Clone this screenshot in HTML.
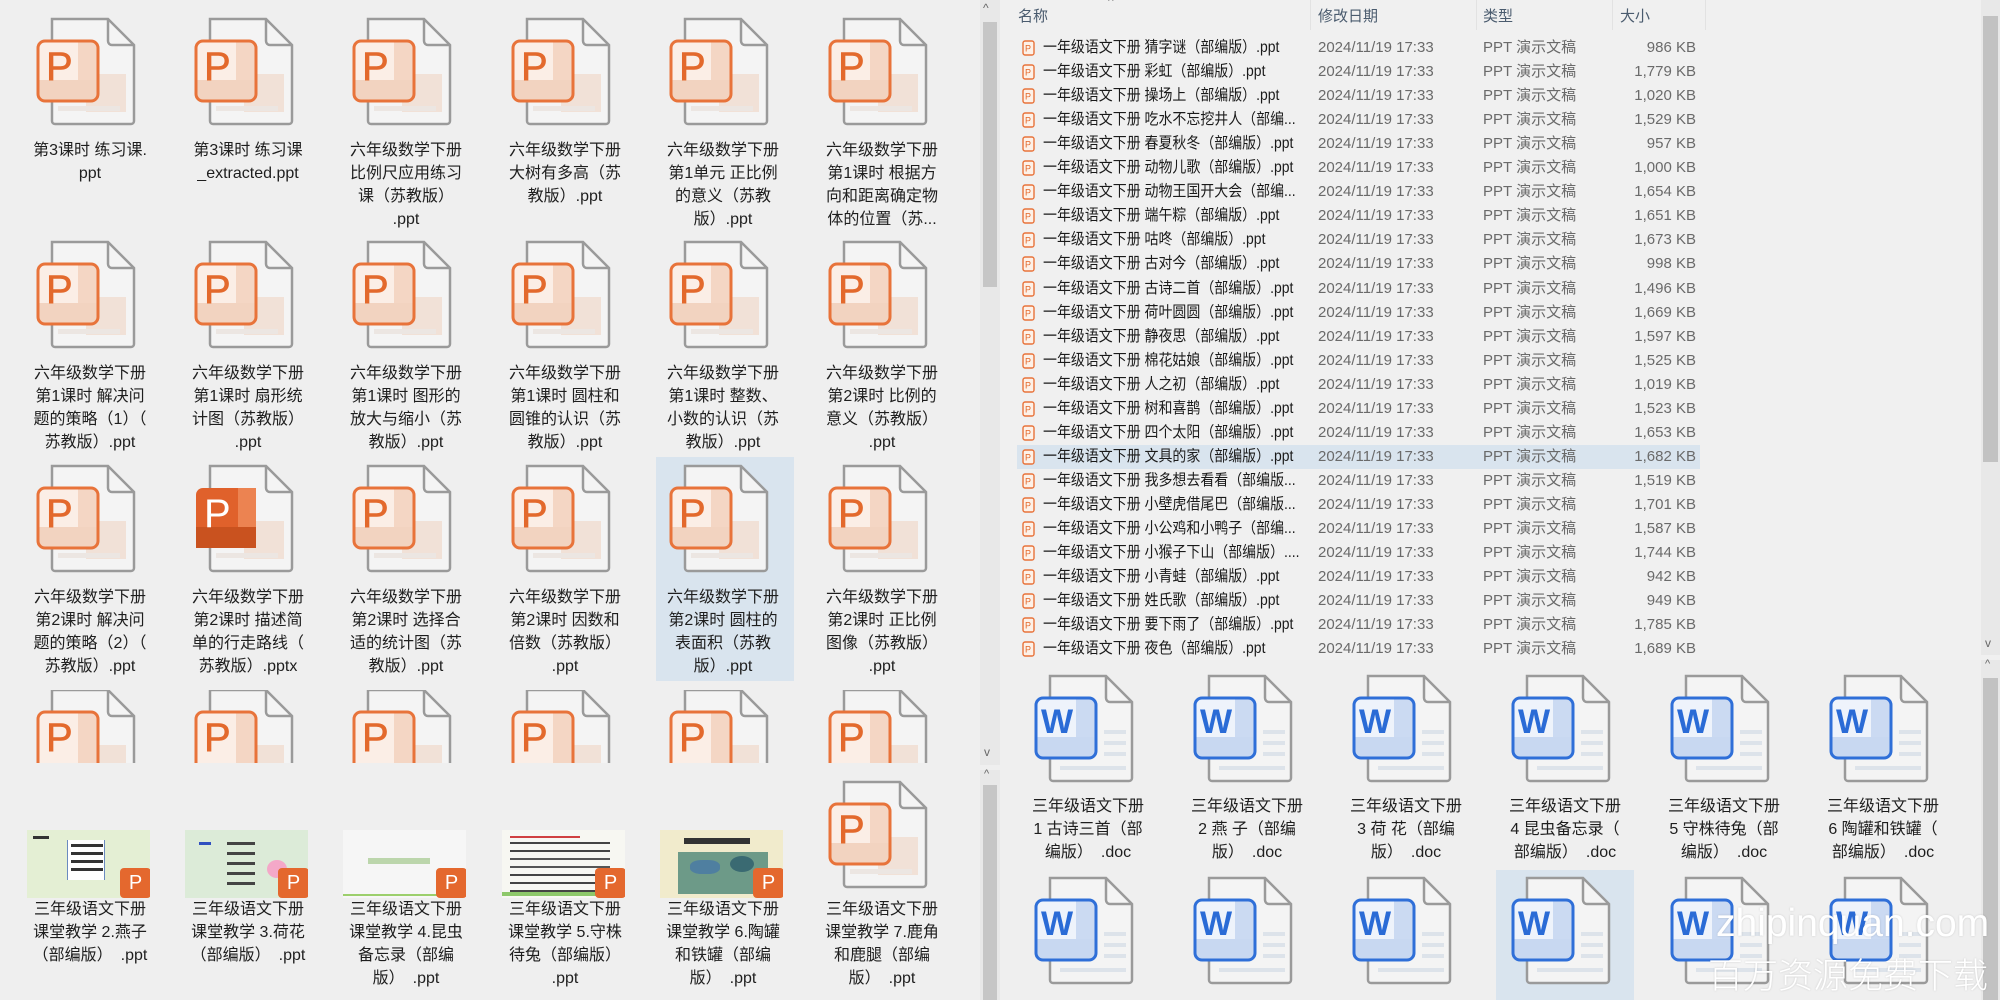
<!DOCTYPE html>
<html><head><meta charset="utf-8">
<style>
*{margin:0;padding:0;box-sizing:border-box}
body{width:2000px;height:1000px;overflow:hidden;background:#efefef;position:relative;font-family:"Liberation Sans","Noto Sans CJK SC",sans-serif}
.ic{position:absolute;width:100px;height:110px}
.lab{position:absolute;width:170px;text-align:center;font-size:16px;line-height:23px;color:#1e1e1e;white-space:nowrap}
.clip{position:absolute;top:690px;height:73px;width:110px;overflow:hidden}
.clip svg{position:absolute;top:-3px;left:0}
.th{position:absolute;top:830px;width:123px;height:68px;overflow:hidden}
.badge{position:absolute;right:-1px;bottom:0;width:31px;height:30px;border-radius:4px;background:#e4682e;color:#fff;font-size:20px;line-height:30px;text-align:center}
.r{position:absolute;left:1000px;width:980px;height:24px;font-size:15px;line-height:24px}
.r .i{position:absolute;left:22px;top:4px}
.r .n{position:absolute;left:43px;color:#1a1a1a;font-size:15.5px;white-space:nowrap;transform:scaleX(0.9);transform-origin:0 50%}
.r .d{position:absolute;left:318px;color:#6a6a6a}
.r .t{position:absolute;left:483px;color:#6a6a6a}
.r .s{position:absolute;right:284px;color:#6a6a6a}
.hd{position:absolute;top:5px;font-size:15px;color:#4a5b6e}
.sep{position:absolute;top:0;width:1px;height:30px;background:#e2e2e2}
</style></head><body>

<svg width="0" height="0" style="position:absolute">
<defs>
<symbol id="pg" viewBox="0 0 100 110">
<path d="M16 3h56l26 26v76a3 3 0 0 1-3 3H19a3 3 0 0 1-3-3z" fill="#f4f4f4" stroke="#9a9a9a" stroke-width="2.5"/>
<path d="M72 3v22a4 4 0 0 0 4 4h22" fill="none" stroke="#9a9a9a" stroke-width="2.5"/>
</symbol>
</defs>
</svg>

<!-- LEFT PANEL -->
<div style="position:absolute;left:656px;top:457px;width:138px;height:224px;background:#d9e4ee"></div>

<!-- row1 -->
<svg class="ic" style="left:36px;top:16px" viewBox="0 0 100 110"><use href="#pg"/><rect x="50" y="58" width="40" height="38" fill="#f1e1d7"/><rect x="22" y="90" width="62" height="5" fill="#ece6e2"/><rect x="2" y="25" width="60" height="60" rx="7" fill="#fbeee6"/><rect x="42" y="26" width="19" height="58" fill="#f4d6c4"/><rect x="3" y="64" width="58" height="20" fill="#f2d3c0"/><rect x="2" y="25" width="60" height="60" rx="7" fill="none" stroke="#e8733a" stroke-width="3"/><text x="10" y="64" font-size="40" font-family="Liberation Sans" fill="#e3692c" stroke="#e3692c" stroke-width="0.6">P</text></svg>
<svg class="ic" style="left:194px;top:16px" viewBox="0 0 100 110"><use href="#pg"/><rect x="50" y="58" width="40" height="38" fill="#f1e1d7"/><rect x="22" y="90" width="62" height="5" fill="#ece6e2"/><rect x="2" y="25" width="60" height="60" rx="7" fill="#fbeee6"/><rect x="42" y="26" width="19" height="58" fill="#f4d6c4"/><rect x="3" y="64" width="58" height="20" fill="#f2d3c0"/><rect x="2" y="25" width="60" height="60" rx="7" fill="none" stroke="#e8733a" stroke-width="3"/><text x="10" y="64" font-size="40" font-family="Liberation Sans" fill="#e3692c" stroke="#e3692c" stroke-width="0.6">P</text></svg>
<svg class="ic" style="left:352px;top:16px" viewBox="0 0 100 110"><use href="#pg"/><rect x="50" y="58" width="40" height="38" fill="#f1e1d7"/><rect x="22" y="90" width="62" height="5" fill="#ece6e2"/><rect x="2" y="25" width="60" height="60" rx="7" fill="#fbeee6"/><rect x="42" y="26" width="19" height="58" fill="#f4d6c4"/><rect x="3" y="64" width="58" height="20" fill="#f2d3c0"/><rect x="2" y="25" width="60" height="60" rx="7" fill="none" stroke="#e8733a" stroke-width="3"/><text x="10" y="64" font-size="40" font-family="Liberation Sans" fill="#e3692c" stroke="#e3692c" stroke-width="0.6">P</text></svg>
<svg class="ic" style="left:511px;top:16px" viewBox="0 0 100 110"><use href="#pg"/><rect x="50" y="58" width="40" height="38" fill="#f1e1d7"/><rect x="22" y="90" width="62" height="5" fill="#ece6e2"/><rect x="2" y="25" width="60" height="60" rx="7" fill="#fbeee6"/><rect x="42" y="26" width="19" height="58" fill="#f4d6c4"/><rect x="3" y="64" width="58" height="20" fill="#f2d3c0"/><rect x="2" y="25" width="60" height="60" rx="7" fill="none" stroke="#e8733a" stroke-width="3"/><text x="10" y="64" font-size="40" font-family="Liberation Sans" fill="#e3692c" stroke="#e3692c" stroke-width="0.6">P</text></svg>
<svg class="ic" style="left:669px;top:16px" viewBox="0 0 100 110"><use href="#pg"/><rect x="50" y="58" width="40" height="38" fill="#f1e1d7"/><rect x="22" y="90" width="62" height="5" fill="#ece6e2"/><rect x="2" y="25" width="60" height="60" rx="7" fill="#fbeee6"/><rect x="42" y="26" width="19" height="58" fill="#f4d6c4"/><rect x="3" y="64" width="58" height="20" fill="#f2d3c0"/><rect x="2" y="25" width="60" height="60" rx="7" fill="none" stroke="#e8733a" stroke-width="3"/><text x="10" y="64" font-size="40" font-family="Liberation Sans" fill="#e3692c" stroke="#e3692c" stroke-width="0.6">P</text></svg>
<svg class="ic" style="left:828px;top:16px" viewBox="0 0 100 110"><use href="#pg"/><rect x="50" y="58" width="40" height="38" fill="#f1e1d7"/><rect x="22" y="90" width="62" height="5" fill="#ece6e2"/><rect x="2" y="25" width="60" height="60" rx="7" fill="#fbeee6"/><rect x="42" y="26" width="19" height="58" fill="#f4d6c4"/><rect x="3" y="64" width="58" height="20" fill="#f2d3c0"/><rect x="2" y="25" width="60" height="60" rx="7" fill="none" stroke="#e8733a" stroke-width="3"/><text x="10" y="64" font-size="40" font-family="Liberation Sans" fill="#e3692c" stroke="#e3692c" stroke-width="0.6">P</text></svg>
<div class="lab" style="left:5px;top:139px">第3课时 练习课.<br>ppt</div>
<div class="lab" style="left:163px;top:139px">第3课时 练习课<br>_extracted.ppt</div>
<div class="lab" style="left:321px;top:139px">六年级数学下册<br>比例尺应用练习<br>课（苏教版）<br>.ppt</div>
<div class="lab" style="left:480px;top:139px">六年级数学下册<br>大树有多高（苏<br>教版）.ppt</div>
<div class="lab" style="left:638px;top:139px">六年级数学下册<br>第1单元 正比例<br>的意义（苏教<br>版）.ppt</div>
<div class="lab" style="left:797px;top:139px">六年级数学下册<br>第1课时 根据方<br>向和距离确定物<br>体的位置（苏...</div>

<!-- row2 -->
<svg class="ic" style="left:36px;top:239px" viewBox="0 0 100 110"><use href="#pg"/><rect x="50" y="58" width="40" height="38" fill="#f1e1d7"/><rect x="22" y="90" width="62" height="5" fill="#ece6e2"/><rect x="2" y="25" width="60" height="60" rx="7" fill="#fbeee6"/><rect x="42" y="26" width="19" height="58" fill="#f4d6c4"/><rect x="3" y="64" width="58" height="20" fill="#f2d3c0"/><rect x="2" y="25" width="60" height="60" rx="7" fill="none" stroke="#e8733a" stroke-width="3"/><text x="10" y="64" font-size="40" font-family="Liberation Sans" fill="#e3692c" stroke="#e3692c" stroke-width="0.6">P</text></svg>
<svg class="ic" style="left:194px;top:239px" viewBox="0 0 100 110"><use href="#pg"/><rect x="50" y="58" width="40" height="38" fill="#f1e1d7"/><rect x="22" y="90" width="62" height="5" fill="#ece6e2"/><rect x="2" y="25" width="60" height="60" rx="7" fill="#fbeee6"/><rect x="42" y="26" width="19" height="58" fill="#f4d6c4"/><rect x="3" y="64" width="58" height="20" fill="#f2d3c0"/><rect x="2" y="25" width="60" height="60" rx="7" fill="none" stroke="#e8733a" stroke-width="3"/><text x="10" y="64" font-size="40" font-family="Liberation Sans" fill="#e3692c" stroke="#e3692c" stroke-width="0.6">P</text></svg>
<svg class="ic" style="left:352px;top:239px" viewBox="0 0 100 110"><use href="#pg"/><rect x="50" y="58" width="40" height="38" fill="#f1e1d7"/><rect x="22" y="90" width="62" height="5" fill="#ece6e2"/><rect x="2" y="25" width="60" height="60" rx="7" fill="#fbeee6"/><rect x="42" y="26" width="19" height="58" fill="#f4d6c4"/><rect x="3" y="64" width="58" height="20" fill="#f2d3c0"/><rect x="2" y="25" width="60" height="60" rx="7" fill="none" stroke="#e8733a" stroke-width="3"/><text x="10" y="64" font-size="40" font-family="Liberation Sans" fill="#e3692c" stroke="#e3692c" stroke-width="0.6">P</text></svg>
<svg class="ic" style="left:511px;top:239px" viewBox="0 0 100 110"><use href="#pg"/><rect x="50" y="58" width="40" height="38" fill="#f1e1d7"/><rect x="22" y="90" width="62" height="5" fill="#ece6e2"/><rect x="2" y="25" width="60" height="60" rx="7" fill="#fbeee6"/><rect x="42" y="26" width="19" height="58" fill="#f4d6c4"/><rect x="3" y="64" width="58" height="20" fill="#f2d3c0"/><rect x="2" y="25" width="60" height="60" rx="7" fill="none" stroke="#e8733a" stroke-width="3"/><text x="10" y="64" font-size="40" font-family="Liberation Sans" fill="#e3692c" stroke="#e3692c" stroke-width="0.6">P</text></svg>
<svg class="ic" style="left:669px;top:239px" viewBox="0 0 100 110"><use href="#pg"/><rect x="50" y="58" width="40" height="38" fill="#f1e1d7"/><rect x="22" y="90" width="62" height="5" fill="#ece6e2"/><rect x="2" y="25" width="60" height="60" rx="7" fill="#fbeee6"/><rect x="42" y="26" width="19" height="58" fill="#f4d6c4"/><rect x="3" y="64" width="58" height="20" fill="#f2d3c0"/><rect x="2" y="25" width="60" height="60" rx="7" fill="none" stroke="#e8733a" stroke-width="3"/><text x="10" y="64" font-size="40" font-family="Liberation Sans" fill="#e3692c" stroke="#e3692c" stroke-width="0.6">P</text></svg>
<svg class="ic" style="left:828px;top:239px" viewBox="0 0 100 110"><use href="#pg"/><rect x="50" y="58" width="40" height="38" fill="#f1e1d7"/><rect x="22" y="90" width="62" height="5" fill="#ece6e2"/><rect x="2" y="25" width="60" height="60" rx="7" fill="#fbeee6"/><rect x="42" y="26" width="19" height="58" fill="#f4d6c4"/><rect x="3" y="64" width="58" height="20" fill="#f2d3c0"/><rect x="2" y="25" width="60" height="60" rx="7" fill="none" stroke="#e8733a" stroke-width="3"/><text x="10" y="64" font-size="40" font-family="Liberation Sans" fill="#e3692c" stroke="#e3692c" stroke-width="0.6">P</text></svg>
<div class="lab" style="left:5px;top:362px">六年级数学下册<br>第1课时 解决问<br>题的策略（1）（<br>苏教版）.ppt</div>
<div class="lab" style="left:163px;top:362px">六年级数学下册<br>第1课时 扇形统<br>计图（苏教版）<br>.ppt</div>
<div class="lab" style="left:321px;top:362px">六年级数学下册<br>第1课时 图形的<br>放大与缩小（苏<br>教版）.ppt</div>
<div class="lab" style="left:480px;top:362px">六年级数学下册<br>第1课时 圆柱和<br>圆锥的认识（苏<br>教版）.ppt</div>
<div class="lab" style="left:638px;top:362px">六年级数学下册<br>第1课时 整数、<br>小数的认识（苏<br>教版）.ppt</div>
<div class="lab" style="left:797px;top:362px">六年级数学下册<br>第2课时 比例的<br>意义（苏教版）<br>.ppt</div>

<!-- row3 -->
<svg class="ic" style="left:36px;top:463px" viewBox="0 0 100 110"><use href="#pg"/><rect x="50" y="58" width="40" height="38" fill="#f1e1d7"/><rect x="22" y="90" width="62" height="5" fill="#ece6e2"/><rect x="2" y="25" width="60" height="60" rx="7" fill="#fbeee6"/><rect x="42" y="26" width="19" height="58" fill="#f4d6c4"/><rect x="3" y="64" width="58" height="20" fill="#f2d3c0"/><rect x="2" y="25" width="60" height="60" rx="7" fill="none" stroke="#e8733a" stroke-width="3"/><text x="10" y="64" font-size="40" font-family="Liberation Sans" fill="#e3692c" stroke="#e3692c" stroke-width="0.6">P</text></svg>
<svg class="ic" style="left:194px;top:463px" viewBox="0 0 100 110"><use href="#pg"/><rect x="50" y="58" width="40" height="38" fill="#f1e1d7"/><rect x="22" y="90" width="62" height="5" fill="#ece6e2"/><rect x="2" y="25" width="60" height="60" rx="7" fill="#e0612b"/><rect x="44" y="25" width="18" height="60" fill="#ec8351"/><rect x="2" y="64" width="60" height="21" fill="#c9521f"/><text x="10" y="64" font-size="40" font-family="Liberation Sans" fill="#fff">P</text></svg>
<svg class="ic" style="left:352px;top:463px" viewBox="0 0 100 110"><use href="#pg"/><rect x="50" y="58" width="40" height="38" fill="#f1e1d7"/><rect x="22" y="90" width="62" height="5" fill="#ece6e2"/><rect x="2" y="25" width="60" height="60" rx="7" fill="#fbeee6"/><rect x="42" y="26" width="19" height="58" fill="#f4d6c4"/><rect x="3" y="64" width="58" height="20" fill="#f2d3c0"/><rect x="2" y="25" width="60" height="60" rx="7" fill="none" stroke="#e8733a" stroke-width="3"/><text x="10" y="64" font-size="40" font-family="Liberation Sans" fill="#e3692c" stroke="#e3692c" stroke-width="0.6">P</text></svg>
<svg class="ic" style="left:511px;top:463px" viewBox="0 0 100 110"><use href="#pg"/><rect x="50" y="58" width="40" height="38" fill="#f1e1d7"/><rect x="22" y="90" width="62" height="5" fill="#ece6e2"/><rect x="2" y="25" width="60" height="60" rx="7" fill="#fbeee6"/><rect x="42" y="26" width="19" height="58" fill="#f4d6c4"/><rect x="3" y="64" width="58" height="20" fill="#f2d3c0"/><rect x="2" y="25" width="60" height="60" rx="7" fill="none" stroke="#e8733a" stroke-width="3"/><text x="10" y="64" font-size="40" font-family="Liberation Sans" fill="#e3692c" stroke="#e3692c" stroke-width="0.6">P</text></svg>
<svg class="ic" style="left:669px;top:463px" viewBox="0 0 100 110"><use href="#pg"/><rect x="50" y="58" width="40" height="38" fill="#f1e1d7"/><rect x="22" y="90" width="62" height="5" fill="#ece6e2"/><rect x="2" y="25" width="60" height="60" rx="7" fill="#fbeee6"/><rect x="42" y="26" width="19" height="58" fill="#f4d6c4"/><rect x="3" y="64" width="58" height="20" fill="#f2d3c0"/><rect x="2" y="25" width="60" height="60" rx="7" fill="none" stroke="#e8733a" stroke-width="3"/><text x="10" y="64" font-size="40" font-family="Liberation Sans" fill="#e3692c" stroke="#e3692c" stroke-width="0.6">P</text></svg>
<svg class="ic" style="left:828px;top:463px" viewBox="0 0 100 110"><use href="#pg"/><rect x="50" y="58" width="40" height="38" fill="#f1e1d7"/><rect x="22" y="90" width="62" height="5" fill="#ece6e2"/><rect x="2" y="25" width="60" height="60" rx="7" fill="#fbeee6"/><rect x="42" y="26" width="19" height="58" fill="#f4d6c4"/><rect x="3" y="64" width="58" height="20" fill="#f2d3c0"/><rect x="2" y="25" width="60" height="60" rx="7" fill="none" stroke="#e8733a" stroke-width="3"/><text x="10" y="64" font-size="40" font-family="Liberation Sans" fill="#e3692c" stroke="#e3692c" stroke-width="0.6">P</text></svg>
<div class="lab" style="left:5px;top:586px">六年级数学下册<br>第2课时 解决问<br>题的策略（2）（<br>苏教版）.ppt</div>
<div class="lab" style="left:163px;top:586px">六年级数学下册<br>第2课时 描述简<br>单的行走路线（<br>苏教版）.pptx</div>
<div class="lab" style="left:321px;top:586px">六年级数学下册<br>第2课时 选择合<br>适的统计图（苏<br>教版）.ppt</div>
<div class="lab" style="left:480px;top:586px">六年级数学下册<br>第2课时 因数和<br>倍数（苏教版）<br>.ppt</div>
<div class="lab" style="left:638px;top:586px">六年级数学下册<br>第2课时 圆柱的<br>表面积（苏教<br>版）.ppt</div>
<div class="lab" style="left:797px;top:586px">六年级数学下册<br>第2课时 正比例<br>图像（苏教版）<br>.ppt</div>

<!-- row4 clipped -->
<div class="clip" style="left:36px"><svg class="ic" viewBox="0 0 100 110"><use href="#pg"/><rect x="50" y="58" width="40" height="38" fill="#f1e1d7"/><rect x="2" y="25" width="60" height="60" rx="7" fill="#fbeee6"/><rect x="42" y="26" width="19" height="58" fill="#f4d6c4"/><rect x="2" y="25" width="60" height="60" rx="7" fill="none" stroke="#e8733a" stroke-width="3"/><text x="10" y="64" font-size="40" font-family="Liberation Sans" fill="#e3692c" stroke="#e3692c" stroke-width="0.6">P</text></svg></div>
<div class="clip" style="left:194px"><svg class="ic" viewBox="0 0 100 110"><use href="#pg"/><rect x="50" y="58" width="40" height="38" fill="#f1e1d7"/><rect x="2" y="25" width="60" height="60" rx="7" fill="#fbeee6"/><rect x="42" y="26" width="19" height="58" fill="#f4d6c4"/><rect x="2" y="25" width="60" height="60" rx="7" fill="none" stroke="#e8733a" stroke-width="3"/><text x="10" y="64" font-size="40" font-family="Liberation Sans" fill="#e3692c" stroke="#e3692c" stroke-width="0.6">P</text></svg></div>
<div class="clip" style="left:352px"><svg class="ic" viewBox="0 0 100 110"><use href="#pg"/><rect x="50" y="58" width="40" height="38" fill="#f1e1d7"/><rect x="2" y="25" width="60" height="60" rx="7" fill="#fbeee6"/><rect x="42" y="26" width="19" height="58" fill="#f4d6c4"/><rect x="2" y="25" width="60" height="60" rx="7" fill="none" stroke="#e8733a" stroke-width="3"/><text x="10" y="64" font-size="40" font-family="Liberation Sans" fill="#e3692c" stroke="#e3692c" stroke-width="0.6">P</text></svg></div>
<div class="clip" style="left:511px"><svg class="ic" viewBox="0 0 100 110"><use href="#pg"/><rect x="50" y="58" width="40" height="38" fill="#f1e1d7"/><rect x="2" y="25" width="60" height="60" rx="7" fill="#fbeee6"/><rect x="42" y="26" width="19" height="58" fill="#f4d6c4"/><rect x="2" y="25" width="60" height="60" rx="7" fill="none" stroke="#e8733a" stroke-width="3"/><text x="10" y="64" font-size="40" font-family="Liberation Sans" fill="#e3692c" stroke="#e3692c" stroke-width="0.6">P</text></svg></div>
<div class="clip" style="left:669px"><svg class="ic" viewBox="0 0 100 110"><use href="#pg"/><rect x="50" y="58" width="40" height="38" fill="#f1e1d7"/><rect x="2" y="25" width="60" height="60" rx="7" fill="#fbeee6"/><rect x="42" y="26" width="19" height="58" fill="#f4d6c4"/><rect x="2" y="25" width="60" height="60" rx="7" fill="none" stroke="#e8733a" stroke-width="3"/><text x="10" y="64" font-size="40" font-family="Liberation Sans" fill="#e3692c" stroke="#e3692c" stroke-width="0.6">P</text></svg></div>
<div class="clip" style="left:828px"><svg class="ic" viewBox="0 0 100 110"><use href="#pg"/><rect x="50" y="58" width="40" height="38" fill="#f1e1d7"/><rect x="2" y="25" width="60" height="60" rx="7" fill="#fbeee6"/><rect x="42" y="26" width="19" height="58" fill="#f4d6c4"/><rect x="2" y="25" width="60" height="60" rx="7" fill="none" stroke="#e8733a" stroke-width="3"/><text x="10" y="64" font-size="40" font-family="Liberation Sans" fill="#e3692c" stroke="#e3692c" stroke-width="0.6">P</text></svg></div>

<!-- left scrollbar -->
<div style="position:absolute;left:980px;top:0;width:20px;height:765px;background:#e8e8e8"></div>
<div style="position:absolute;left:983px;top:22px;width:14px;height:265px;background:#c6c6c6"></div>
<div style="position:absolute;left:983px;top:1px;font-size:12px;color:#666">^</div>
<div style="position:absolute;left:984px;top:745px;font-size:12px;color:#666">v</div>
<div style="position:absolute;left:980px;top:770px;width:20px;height:230px;background:#e8e8e8"></div>
<div style="position:absolute;left:983px;top:785px;width:14px;height:215px;background:#c6c6c6"></div>
<div style="position:absolute;left:984px;top:768px;font-size:11px;color:#666">^</div>

<!-- bottom thumbnails -->
<div class="th" style="left:27px;background:#e4efd4"><div style="position:absolute;left:40px;top:10px;width:38px;height:40px;border-left:1px solid #6a8ac0;border-right:1px solid #6a8ac0;background:#fff"></div><div style="position:absolute;left:44px;top:14px;width:32px;height:3px;background:#333;box-shadow:0 8px 0 #333,0 16px 0 #333,0 24px 0 #333"></div><div style="position:absolute;left:6px;top:6px;width:16px;height:3px;background:#333"></div><div class="badge">P</div></div>
<div class="th" style="left:185px;background:#dcebd8"><div style="position:absolute;left:42px;top:12px;width:28px;height:3px;background:#444;box-shadow:0 10px 0 #444,0 20px 0 #444,0 30px 0 #444,0 40px 0 #444"></div><div style="position:absolute;left:14px;top:12px;width:12px;height:3px;background:#3050c0"></div><div style="position:absolute;left:82px;top:30px;width:20px;height:18px;border-radius:50%;background:#f4a8c8"></div><div class="badge">P</div></div>
<div class="th" style="left:343px;background:#f6f6f6"><div style="position:absolute;left:25px;top:28px;width:62px;height:6px;background:#bcd6ac"></div><div style="position:absolute;left:0;bottom:2px;width:100%;height:2px;background:#9ccf6c"></div><div class="badge">P</div></div>
<div class="th" style="left:502px;background:#f7f7f2"><div style="position:absolute;left:8px;top:12px;width:100px;height:2px;background:#444;box-shadow:0 8px 0 #444,0 16px 0 #555,0 24px 0 #555,0 32px 0 #444,0 40px 0 #444,0 48px 0 #444"></div><div style="position:absolute;left:8px;top:6px;width:70px;height:2px;background:#d04040"></div><div style="position:absolute;left:0;bottom:2px;width:100%;height:4px;background:#8dc86a"></div><div class="badge">P</div></div>
<div class="th" style="left:660px;background:#f1ebcc"><div style="position:absolute;left:24px;top:8px;width:66px;height:6px;background:#333"></div><div style="position:absolute;left:18px;top:22px;width:90px;height:42px;background:#6d9a88"></div><div style="position:absolute;left:30px;top:30px;width:30px;height:14px;border-radius:40%;background:#4f7fa0"></div><div style="position:absolute;left:70px;top:26px;width:24px;height:16px;border-radius:50%;background:#3a6a72"></div><div class="badge">P</div></div>
<svg class="ic" style="left:828px;top:779px" viewBox="0 0 100 110"><use href="#pg"/><rect x="50" y="58" width="40" height="38" fill="#f1e1d7"/><rect x="22" y="90" width="62" height="5" fill="#ece6e2"/><rect x="2" y="25" width="60" height="60" rx="7" fill="#fbeee6"/><rect x="42" y="26" width="19" height="58" fill="#f4d6c4"/><rect x="3" y="64" width="58" height="20" fill="#f2d3c0"/><rect x="2" y="25" width="60" height="60" rx="7" fill="none" stroke="#e8733a" stroke-width="3"/><text x="10" y="64" font-size="40" font-family="Liberation Sans" fill="#e3692c" stroke="#e3692c" stroke-width="0.6">P</text></svg>
<div class="lab" style="left:5px;top:898px">三年级语文下册<br>课堂教学 2.燕子<br>（部编版）　.ppt</div>
<div class="lab" style="left:163px;top:898px">三年级语文下册<br>课堂教学 3.荷花<br>（部编版）　.ppt</div>
<div class="lab" style="left:321px;top:898px">三年级语文下册<br>课堂教学 4.昆虫<br>备忘录（部编<br>版）　.ppt</div>
<div class="lab" style="left:480px;top:898px">三年级语文下册<br>课堂教学 5.守株<br>待兔（部编版）<br>.ppt</div>
<div class="lab" style="left:638px;top:898px">三年级语文下册<br>课堂教学 6.陶罐<br>和铁罐（部编<br>版）　.ppt</div>
<div class="lab" style="left:797px;top:898px">三年级语文下册<br>课堂教学 7.鹿角<br>和鹿腿（部编<br>版）　.ppt</div>

<!-- RIGHT PANEL header -->
<div style="position:absolute;left:1000px;top:0;width:1000px;height:660px;background:#f0f0f0"></div>
<div class="hd" style="left:1018px">名称</div>
<div class="hd" style="left:1318px">修改日期</div>
<div class="hd" style="left:1483px">类型</div>
<div class="hd" style="left:1620px">大小</div>
<div style="position:absolute;left:1108px;top:-6px;font-size:12px;color:#888">^</div>
<div class="sep" style="left:1310px"></div><div class="sep" style="left:1476px"></div><div class="sep" style="left:1612px"></div><div class="sep" style="left:1705px"></div>

<div style="position:absolute;left:1017px;top:445px;width:683px;height:24px;background:#d9e4ee"></div>

<div class="r" style="top:36px"><svg class="i" width="13" height="16" viewBox="0 0 13 16"><rect x="1" y="1" width="11" height="14" rx="2" fill="#fdf1e8" stroke="#e8733a" stroke-width="1.4"/><text x="3" y="11.5" font-size="9" fill="#e3692c" font-family="Liberation Sans">P</text></svg><span class="n">一年级语文下册 猜字谜（部编版）.ppt</span><span class="d">2024/11/19 17:33</span><span class="t">PPT 演示文稿</span><span class="s">986 KB</span></div>
<div class="r" style="top:60px"><svg class="i" width="13" height="16" viewBox="0 0 13 16"><rect x="1" y="1" width="11" height="14" rx="2" fill="#fdf1e8" stroke="#e8733a" stroke-width="1.4"/><text x="3" y="11.5" font-size="9" fill="#e3692c" font-family="Liberation Sans">P</text></svg><span class="n">一年级语文下册 彩虹（部编版）.ppt</span><span class="d">2024/11/19 17:33</span><span class="t">PPT 演示文稿</span><span class="s">1,779 KB</span></div>
<div class="r" style="top:84px"><svg class="i" width="13" height="16" viewBox="0 0 13 16"><rect x="1" y="1" width="11" height="14" rx="2" fill="#fdf1e8" stroke="#e8733a" stroke-width="1.4"/><text x="3" y="11.5" font-size="9" fill="#e3692c" font-family="Liberation Sans">P</text></svg><span class="n">一年级语文下册 操场上（部编版）.ppt</span><span class="d">2024/11/19 17:33</span><span class="t">PPT 演示文稿</span><span class="s">1,020 KB</span></div>
<div class="r" style="top:108px"><svg class="i" width="13" height="16" viewBox="0 0 13 16"><rect x="1" y="1" width="11" height="14" rx="2" fill="#fdf1e8" stroke="#e8733a" stroke-width="1.4"/><text x="3" y="11.5" font-size="9" fill="#e3692c" font-family="Liberation Sans">P</text></svg><span class="n">一年级语文下册 吃水不忘挖井人（部编...</span><span class="d">2024/11/19 17:33</span><span class="t">PPT 演示文稿</span><span class="s">1,529 KB</span></div>
<div class="r" style="top:132px"><svg class="i" width="13" height="16" viewBox="0 0 13 16"><rect x="1" y="1" width="11" height="14" rx="2" fill="#fdf1e8" stroke="#e8733a" stroke-width="1.4"/><text x="3" y="11.5" font-size="9" fill="#e3692c" font-family="Liberation Sans">P</text></svg><span class="n">一年级语文下册 春夏秋冬（部编版）.ppt</span><span class="d">2024/11/19 17:33</span><span class="t">PPT 演示文稿</span><span class="s">957 KB</span></div>
<div class="r" style="top:156px"><svg class="i" width="13" height="16" viewBox="0 0 13 16"><rect x="1" y="1" width="11" height="14" rx="2" fill="#fdf1e8" stroke="#e8733a" stroke-width="1.4"/><text x="3" y="11.5" font-size="9" fill="#e3692c" font-family="Liberation Sans">P</text></svg><span class="n">一年级语文下册 动物儿歌（部编版）.ppt</span><span class="d">2024/11/19 17:33</span><span class="t">PPT 演示文稿</span><span class="s">1,000 KB</span></div>
<div class="r" style="top:180px"><svg class="i" width="13" height="16" viewBox="0 0 13 16"><rect x="1" y="1" width="11" height="14" rx="2" fill="#fdf1e8" stroke="#e8733a" stroke-width="1.4"/><text x="3" y="11.5" font-size="9" fill="#e3692c" font-family="Liberation Sans">P</text></svg><span class="n">一年级语文下册 动物王国开大会（部编...</span><span class="d">2024/11/19 17:33</span><span class="t">PPT 演示文稿</span><span class="s">1,654 KB</span></div>
<div class="r" style="top:204px"><svg class="i" width="13" height="16" viewBox="0 0 13 16"><rect x="1" y="1" width="11" height="14" rx="2" fill="#fdf1e8" stroke="#e8733a" stroke-width="1.4"/><text x="3" y="11.5" font-size="9" fill="#e3692c" font-family="Liberation Sans">P</text></svg><span class="n">一年级语文下册 端午粽（部编版）.ppt</span><span class="d">2024/11/19 17:33</span><span class="t">PPT 演示文稿</span><span class="s">1,651 KB</span></div>
<div class="r" style="top:228px"><svg class="i" width="13" height="16" viewBox="0 0 13 16"><rect x="1" y="1" width="11" height="14" rx="2" fill="#fdf1e8" stroke="#e8733a" stroke-width="1.4"/><text x="3" y="11.5" font-size="9" fill="#e3692c" font-family="Liberation Sans">P</text></svg><span class="n">一年级语文下册 咕咚（部编版）.ppt</span><span class="d">2024/11/19 17:33</span><span class="t">PPT 演示文稿</span><span class="s">1,673 KB</span></div>
<div class="r" style="top:252px"><svg class="i" width="13" height="16" viewBox="0 0 13 16"><rect x="1" y="1" width="11" height="14" rx="2" fill="#fdf1e8" stroke="#e8733a" stroke-width="1.4"/><text x="3" y="11.5" font-size="9" fill="#e3692c" font-family="Liberation Sans">P</text></svg><span class="n">一年级语文下册 古对今（部编版）.ppt</span><span class="d">2024/11/19 17:33</span><span class="t">PPT 演示文稿</span><span class="s">998 KB</span></div>
<div class="r" style="top:277px"><svg class="i" width="13" height="16" viewBox="0 0 13 16"><rect x="1" y="1" width="11" height="14" rx="2" fill="#fdf1e8" stroke="#e8733a" stroke-width="1.4"/><text x="3" y="11.5" font-size="9" fill="#e3692c" font-family="Liberation Sans">P</text></svg><span class="n">一年级语文下册 古诗二首（部编版）.ppt</span><span class="d">2024/11/19 17:33</span><span class="t">PPT 演示文稿</span><span class="s">1,496 KB</span></div>
<div class="r" style="top:301px"><svg class="i" width="13" height="16" viewBox="0 0 13 16"><rect x="1" y="1" width="11" height="14" rx="2" fill="#fdf1e8" stroke="#e8733a" stroke-width="1.4"/><text x="3" y="11.5" font-size="9" fill="#e3692c" font-family="Liberation Sans">P</text></svg><span class="n">一年级语文下册 荷叶圆圆（部编版）.ppt</span><span class="d">2024/11/19 17:33</span><span class="t">PPT 演示文稿</span><span class="s">1,669 KB</span></div>
<div class="r" style="top:325px"><svg class="i" width="13" height="16" viewBox="0 0 13 16"><rect x="1" y="1" width="11" height="14" rx="2" fill="#fdf1e8" stroke="#e8733a" stroke-width="1.4"/><text x="3" y="11.5" font-size="9" fill="#e3692c" font-family="Liberation Sans">P</text></svg><span class="n">一年级语文下册 静夜思（部编版）.ppt</span><span class="d">2024/11/19 17:33</span><span class="t">PPT 演示文稿</span><span class="s">1,597 KB</span></div>
<div class="r" style="top:349px"><svg class="i" width="13" height="16" viewBox="0 0 13 16"><rect x="1" y="1" width="11" height="14" rx="2" fill="#fdf1e8" stroke="#e8733a" stroke-width="1.4"/><text x="3" y="11.5" font-size="9" fill="#e3692c" font-family="Liberation Sans">P</text></svg><span class="n">一年级语文下册 棉花姑娘（部编版）.ppt</span><span class="d">2024/11/19 17:33</span><span class="t">PPT 演示文稿</span><span class="s">1,525 KB</span></div>
<div class="r" style="top:373px"><svg class="i" width="13" height="16" viewBox="0 0 13 16"><rect x="1" y="1" width="11" height="14" rx="2" fill="#fdf1e8" stroke="#e8733a" stroke-width="1.4"/><text x="3" y="11.5" font-size="9" fill="#e3692c" font-family="Liberation Sans">P</text></svg><span class="n">一年级语文下册 人之初（部编版）.ppt</span><span class="d">2024/11/19 17:33</span><span class="t">PPT 演示文稿</span><span class="s">1,019 KB</span></div>
<div class="r" style="top:397px"><svg class="i" width="13" height="16" viewBox="0 0 13 16"><rect x="1" y="1" width="11" height="14" rx="2" fill="#fdf1e8" stroke="#e8733a" stroke-width="1.4"/><text x="3" y="11.5" font-size="9" fill="#e3692c" font-family="Liberation Sans">P</text></svg><span class="n">一年级语文下册 树和喜鹊（部编版）.ppt</span><span class="d">2024/11/19 17:33</span><span class="t">PPT 演示文稿</span><span class="s">1,523 KB</span></div>
<div class="r" style="top:421px"><svg class="i" width="13" height="16" viewBox="0 0 13 16"><rect x="1" y="1" width="11" height="14" rx="2" fill="#fdf1e8" stroke="#e8733a" stroke-width="1.4"/><text x="3" y="11.5" font-size="9" fill="#e3692c" font-family="Liberation Sans">P</text></svg><span class="n">一年级语文下册 四个太阳（部编版）.ppt</span><span class="d">2024/11/19 17:33</span><span class="t">PPT 演示文稿</span><span class="s">1,653 KB</span></div>
<div class="r" style="top:445px"><svg class="i" width="13" height="16" viewBox="0 0 13 16"><rect x="1" y="1" width="11" height="14" rx="2" fill="#fdf1e8" stroke="#e8733a" stroke-width="1.4"/><text x="3" y="11.5" font-size="9" fill="#e3692c" font-family="Liberation Sans">P</text></svg><span class="n">一年级语文下册 文具的家（部编版）.ppt</span><span class="d">2024/11/19 17:33</span><span class="t">PPT 演示文稿</span><span class="s">1,682 KB</span></div>
<div class="r" style="top:469px"><svg class="i" width="13" height="16" viewBox="0 0 13 16"><rect x="1" y="1" width="11" height="14" rx="2" fill="#fdf1e8" stroke="#e8733a" stroke-width="1.4"/><text x="3" y="11.5" font-size="9" fill="#e3692c" font-family="Liberation Sans">P</text></svg><span class="n">一年级语文下册 我多想去看看（部编版...</span><span class="d">2024/11/19 17:33</span><span class="t">PPT 演示文稿</span><span class="s">1,519 KB</span></div>
<div class="r" style="top:493px"><svg class="i" width="13" height="16" viewBox="0 0 13 16"><rect x="1" y="1" width="11" height="14" rx="2" fill="#fdf1e8" stroke="#e8733a" stroke-width="1.4"/><text x="3" y="11.5" font-size="9" fill="#e3692c" font-family="Liberation Sans">P</text></svg><span class="n">一年级语文下册 小壁虎借尾巴（部编版...</span><span class="d">2024/11/19 17:33</span><span class="t">PPT 演示文稿</span><span class="s">1,701 KB</span></div>
<div class="r" style="top:517px"><svg class="i" width="13" height="16" viewBox="0 0 13 16"><rect x="1" y="1" width="11" height="14" rx="2" fill="#fdf1e8" stroke="#e8733a" stroke-width="1.4"/><text x="3" y="11.5" font-size="9" fill="#e3692c" font-family="Liberation Sans">P</text></svg><span class="n">一年级语文下册 小公鸡和小鸭子（部编...</span><span class="d">2024/11/19 17:33</span><span class="t">PPT 演示文稿</span><span class="s">1,587 KB</span></div>
<div class="r" style="top:541px"><svg class="i" width="13" height="16" viewBox="0 0 13 16"><rect x="1" y="1" width="11" height="14" rx="2" fill="#fdf1e8" stroke="#e8733a" stroke-width="1.4"/><text x="3" y="11.5" font-size="9" fill="#e3692c" font-family="Liberation Sans">P</text></svg><span class="n">一年级语文下册 小猴子下山（部编版）....</span><span class="d">2024/11/19 17:33</span><span class="t">PPT 演示文稿</span><span class="s">1,744 KB</span></div>
<div class="r" style="top:565px"><svg class="i" width="13" height="16" viewBox="0 0 13 16"><rect x="1" y="1" width="11" height="14" rx="2" fill="#fdf1e8" stroke="#e8733a" stroke-width="1.4"/><text x="3" y="11.5" font-size="9" fill="#e3692c" font-family="Liberation Sans">P</text></svg><span class="n">一年级语文下册 小青蛙（部编版）.ppt</span><span class="d">2024/11/19 17:33</span><span class="t">PPT 演示文稿</span><span class="s">942 KB</span></div>
<div class="r" style="top:589px"><svg class="i" width="13" height="16" viewBox="0 0 13 16"><rect x="1" y="1" width="11" height="14" rx="2" fill="#fdf1e8" stroke="#e8733a" stroke-width="1.4"/><text x="3" y="11.5" font-size="9" fill="#e3692c" font-family="Liberation Sans">P</text></svg><span class="n">一年级语文下册 姓氏歌（部编版）.ppt</span><span class="d">2024/11/19 17:33</span><span class="t">PPT 演示文稿</span><span class="s">949 KB</span></div>
<div class="r" style="top:613px"><svg class="i" width="13" height="16" viewBox="0 0 13 16"><rect x="1" y="1" width="11" height="14" rx="2" fill="#fdf1e8" stroke="#e8733a" stroke-width="1.4"/><text x="3" y="11.5" font-size="9" fill="#e3692c" font-family="Liberation Sans">P</text></svg><span class="n">一年级语文下册 要下雨了（部编版）.ppt</span><span class="d">2024/11/19 17:33</span><span class="t">PPT 演示文稿</span><span class="s">1,785 KB</span></div>
<div class="r" style="top:637px"><svg class="i" width="13" height="16" viewBox="0 0 13 16"><rect x="1" y="1" width="11" height="14" rx="2" fill="#fdf1e8" stroke="#e8733a" stroke-width="1.4"/><text x="3" y="11.5" font-size="9" fill="#e3692c" font-family="Liberation Sans">P</text></svg><span class="n">一年级语文下册 夜色（部编版）.ppt</span><span class="d">2024/11/19 17:33</span><span class="t">PPT 演示文稿</span><span class="s">1,689 KB</span></div>

<!-- right scrollbars -->
<div style="position:absolute;left:1981px;top:0;width:19px;height:655px;background:#e8e8e8"></div>
<div style="position:absolute;left:1983px;top:16px;width:15px;height:446px;background:#c2c2c2"></div>
<div style="position:absolute;left:1985px;top:636px;font-size:12px;color:#666">v</div>
<div style="position:absolute;left:1981px;top:660px;width:19px;height:340px;background:#e8e8e8"></div>
<div style="position:absolute;left:1985px;top:658px;font-size:11px;color:#666">^</div>
<div style="position:absolute;left:1983px;top:678px;width:15px;height:322px;background:#c2c2c2"></div>

<!-- right grid -->
<div style="position:absolute;left:1496px;top:870px;width:138px;height:130px;background:#d9e4ee"></div>

<svg class="ic" style="left:1034px;top:673px" viewBox="0 0 100 110"><use href="#pg"/><rect x="70" y="57" width="22" height="4" fill="#dde3ea"/><rect x="70" y="68" width="22" height="4" fill="#dde3ea"/><rect x="70" y="79" width="22" height="4" fill="#dde3ea"/><rect x="26" y="93" width="66" height="4" fill="#dde3ea"/><rect x="2" y="25" width="60" height="60" rx="7" fill="#eef3fb"/><rect x="42" y="26" width="19" height="58" fill="#cbdaf2"/><rect x="3" y="64" width="58" height="20" fill="#c8d8f1"/><rect x="2" y="25" width="60" height="60" rx="7" fill="none" stroke="#2f6fd8" stroke-width="3"/><text x="7" y="60" font-size="34" font-weight="bold" font-family="Liberation Sans" fill="#2a6bd6">W</text></svg>
<svg class="ic" style="left:1193px;top:673px" viewBox="0 0 100 110"><use href="#pg"/><rect x="70" y="57" width="22" height="4" fill="#dde3ea"/><rect x="70" y="68" width="22" height="4" fill="#dde3ea"/><rect x="70" y="79" width="22" height="4" fill="#dde3ea"/><rect x="26" y="93" width="66" height="4" fill="#dde3ea"/><rect x="2" y="25" width="60" height="60" rx="7" fill="#eef3fb"/><rect x="42" y="26" width="19" height="58" fill="#cbdaf2"/><rect x="3" y="64" width="58" height="20" fill="#c8d8f1"/><rect x="2" y="25" width="60" height="60" rx="7" fill="none" stroke="#2f6fd8" stroke-width="3"/><text x="7" y="60" font-size="34" font-weight="bold" font-family="Liberation Sans" fill="#2a6bd6">W</text></svg>
<svg class="ic" style="left:1352px;top:673px" viewBox="0 0 100 110"><use href="#pg"/><rect x="70" y="57" width="22" height="4" fill="#dde3ea"/><rect x="70" y="68" width="22" height="4" fill="#dde3ea"/><rect x="70" y="79" width="22" height="4" fill="#dde3ea"/><rect x="26" y="93" width="66" height="4" fill="#dde3ea"/><rect x="2" y="25" width="60" height="60" rx="7" fill="#eef3fb"/><rect x="42" y="26" width="19" height="58" fill="#cbdaf2"/><rect x="3" y="64" width="58" height="20" fill="#c8d8f1"/><rect x="2" y="25" width="60" height="60" rx="7" fill="none" stroke="#2f6fd8" stroke-width="3"/><text x="7" y="60" font-size="34" font-weight="bold" font-family="Liberation Sans" fill="#2a6bd6">W</text></svg>
<svg class="ic" style="left:1511px;top:673px" viewBox="0 0 100 110"><use href="#pg"/><rect x="70" y="57" width="22" height="4" fill="#dde3ea"/><rect x="70" y="68" width="22" height="4" fill="#dde3ea"/><rect x="70" y="79" width="22" height="4" fill="#dde3ea"/><rect x="26" y="93" width="66" height="4" fill="#dde3ea"/><rect x="2" y="25" width="60" height="60" rx="7" fill="#eef3fb"/><rect x="42" y="26" width="19" height="58" fill="#cbdaf2"/><rect x="3" y="64" width="58" height="20" fill="#c8d8f1"/><rect x="2" y="25" width="60" height="60" rx="7" fill="none" stroke="#2f6fd8" stroke-width="3"/><text x="7" y="60" font-size="34" font-weight="bold" font-family="Liberation Sans" fill="#2a6bd6">W</text></svg>
<svg class="ic" style="left:1670px;top:673px" viewBox="0 0 100 110"><use href="#pg"/><rect x="70" y="57" width="22" height="4" fill="#dde3ea"/><rect x="70" y="68" width="22" height="4" fill="#dde3ea"/><rect x="70" y="79" width="22" height="4" fill="#dde3ea"/><rect x="26" y="93" width="66" height="4" fill="#dde3ea"/><rect x="2" y="25" width="60" height="60" rx="7" fill="#eef3fb"/><rect x="42" y="26" width="19" height="58" fill="#cbdaf2"/><rect x="3" y="64" width="58" height="20" fill="#c8d8f1"/><rect x="2" y="25" width="60" height="60" rx="7" fill="none" stroke="#2f6fd8" stroke-width="3"/><text x="7" y="60" font-size="34" font-weight="bold" font-family="Liberation Sans" fill="#2a6bd6">W</text></svg>
<svg class="ic" style="left:1829px;top:673px" viewBox="0 0 100 110"><use href="#pg"/><rect x="70" y="57" width="22" height="4" fill="#dde3ea"/><rect x="70" y="68" width="22" height="4" fill="#dde3ea"/><rect x="70" y="79" width="22" height="4" fill="#dde3ea"/><rect x="26" y="93" width="66" height="4" fill="#dde3ea"/><rect x="2" y="25" width="60" height="60" rx="7" fill="#eef3fb"/><rect x="42" y="26" width="19" height="58" fill="#cbdaf2"/><rect x="3" y="64" width="58" height="20" fill="#c8d8f1"/><rect x="2" y="25" width="60" height="60" rx="7" fill="none" stroke="#2f6fd8" stroke-width="3"/><text x="7" y="60" font-size="34" font-weight="bold" font-family="Liberation Sans" fill="#2a6bd6">W</text></svg>
<div class="lab" style="left:1003px;top:795px">三年级语文下册<br>1 古诗三首（部<br>编版）　.doc</div>
<div class="lab" style="left:1162px;top:795px">三年级语文下册<br>2 燕 子（部编<br>版）　.doc</div>
<div class="lab" style="left:1321px;top:795px">三年级语文下册<br>3 荷 花（部编<br>版）　.doc</div>
<div class="lab" style="left:1480px;top:795px">三年级语文下册<br>4 昆虫备忘录（<br>部编版）　.doc</div>
<div class="lab" style="left:1639px;top:795px">三年级语文下册<br>5 守株待兔（部<br>编版）　.doc</div>
<div class="lab" style="left:1798px;top:795px">三年级语文下册<br>6 陶罐和铁罐（<br>部编版）　.doc</div>

<svg class="ic" style="left:1034px;top:875px" viewBox="0 0 100 110"><use href="#pg"/><rect x="70" y="57" width="22" height="4" fill="#dde3ea"/><rect x="70" y="68" width="22" height="4" fill="#dde3ea"/><rect x="70" y="79" width="22" height="4" fill="#dde3ea"/><rect x="26" y="93" width="66" height="4" fill="#dde3ea"/><rect x="2" y="25" width="60" height="60" rx="7" fill="#eef3fb"/><rect x="42" y="26" width="19" height="58" fill="#cbdaf2"/><rect x="3" y="64" width="58" height="20" fill="#c8d8f1"/><rect x="2" y="25" width="60" height="60" rx="7" fill="none" stroke="#2f6fd8" stroke-width="3"/><text x="7" y="60" font-size="34" font-weight="bold" font-family="Liberation Sans" fill="#2a6bd6">W</text></svg>
<svg class="ic" style="left:1193px;top:875px" viewBox="0 0 100 110"><use href="#pg"/><rect x="70" y="57" width="22" height="4" fill="#dde3ea"/><rect x="70" y="68" width="22" height="4" fill="#dde3ea"/><rect x="70" y="79" width="22" height="4" fill="#dde3ea"/><rect x="26" y="93" width="66" height="4" fill="#dde3ea"/><rect x="2" y="25" width="60" height="60" rx="7" fill="#eef3fb"/><rect x="42" y="26" width="19" height="58" fill="#cbdaf2"/><rect x="3" y="64" width="58" height="20" fill="#c8d8f1"/><rect x="2" y="25" width="60" height="60" rx="7" fill="none" stroke="#2f6fd8" stroke-width="3"/><text x="7" y="60" font-size="34" font-weight="bold" font-family="Liberation Sans" fill="#2a6bd6">W</text></svg>
<svg class="ic" style="left:1352px;top:875px" viewBox="0 0 100 110"><use href="#pg"/><rect x="70" y="57" width="22" height="4" fill="#dde3ea"/><rect x="70" y="68" width="22" height="4" fill="#dde3ea"/><rect x="70" y="79" width="22" height="4" fill="#dde3ea"/><rect x="26" y="93" width="66" height="4" fill="#dde3ea"/><rect x="2" y="25" width="60" height="60" rx="7" fill="#eef3fb"/><rect x="42" y="26" width="19" height="58" fill="#cbdaf2"/><rect x="3" y="64" width="58" height="20" fill="#c8d8f1"/><rect x="2" y="25" width="60" height="60" rx="7" fill="none" stroke="#2f6fd8" stroke-width="3"/><text x="7" y="60" font-size="34" font-weight="bold" font-family="Liberation Sans" fill="#2a6bd6">W</text></svg>
<svg class="ic" style="left:1511px;top:875px" viewBox="0 0 100 110"><use href="#pg"/><rect x="70" y="57" width="22" height="4" fill="#dde3ea"/><rect x="70" y="68" width="22" height="4" fill="#dde3ea"/><rect x="70" y="79" width="22" height="4" fill="#dde3ea"/><rect x="26" y="93" width="66" height="4" fill="#dde3ea"/><rect x="2" y="25" width="60" height="60" rx="7" fill="#eef3fb"/><rect x="42" y="26" width="19" height="58" fill="#cbdaf2"/><rect x="3" y="64" width="58" height="20" fill="#c8d8f1"/><rect x="2" y="25" width="60" height="60" rx="7" fill="none" stroke="#2f6fd8" stroke-width="3"/><text x="7" y="60" font-size="34" font-weight="bold" font-family="Liberation Sans" fill="#2a6bd6">W</text></svg>
<svg class="ic" style="left:1670px;top:875px" viewBox="0 0 100 110"><use href="#pg"/><rect x="70" y="57" width="22" height="4" fill="#dde3ea"/><rect x="70" y="68" width="22" height="4" fill="#dde3ea"/><rect x="70" y="79" width="22" height="4" fill="#dde3ea"/><rect x="26" y="93" width="66" height="4" fill="#dde3ea"/><rect x="2" y="25" width="60" height="60" rx="7" fill="#eef3fb"/><rect x="42" y="26" width="19" height="58" fill="#cbdaf2"/><rect x="3" y="64" width="58" height="20" fill="#c8d8f1"/><rect x="2" y="25" width="60" height="60" rx="7" fill="none" stroke="#2f6fd8" stroke-width="3"/><text x="7" y="60" font-size="34" font-weight="bold" font-family="Liberation Sans" fill="#2a6bd6">W</text></svg>
<svg class="ic" style="left:1829px;top:875px" viewBox="0 0 100 110"><use href="#pg"/><rect x="70" y="57" width="22" height="4" fill="#dde3ea"/><rect x="70" y="68" width="22" height="4" fill="#dde3ea"/><rect x="70" y="79" width="22" height="4" fill="#dde3ea"/><rect x="26" y="93" width="66" height="4" fill="#dde3ea"/><rect x="2" y="25" width="60" height="60" rx="7" fill="#eef3fb"/><rect x="42" y="26" width="19" height="58" fill="#cbdaf2"/><rect x="3" y="64" width="58" height="20" fill="#c8d8f1"/><rect x="2" y="25" width="60" height="60" rx="7" fill="none" stroke="#2f6fd8" stroke-width="3"/><text x="7" y="60" font-size="34" font-weight="bold" font-family="Liberation Sans" fill="#2a6bd6">W</text></svg>

<!-- watermark -->
<div style="position:absolute;left:1716px;top:902px;font-size:39px;line-height:44px;color:#fff;white-space:nowrap;text-shadow:0 0 2px rgba(0,0,0,0.15)">zhipinquan.com</div>
<div style="position:absolute;left:1708px;top:953px;font-size:35px;line-height:42px;color:#fff;white-space:nowrap;text-shadow:0 0 2px rgba(0,0,0,0.15);font-family:'Noto Sans CJK SC',sans-serif;font-weight:300">百万资源免费下载</div>
</body></html>
